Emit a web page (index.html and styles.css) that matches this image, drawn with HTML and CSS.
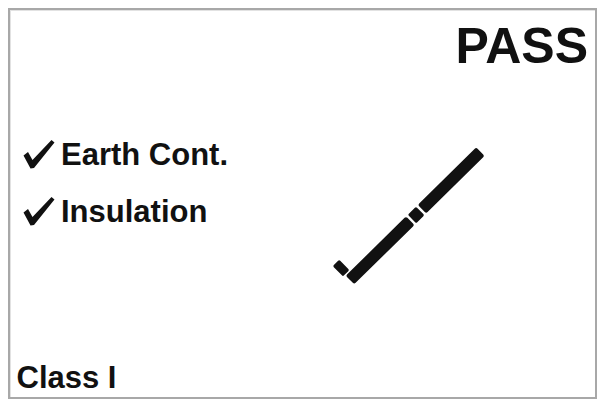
FILE: index.html
```html
<!DOCTYPE html>
<html>
<head>
<meta charset="utf-8">
<link rel="stylesheet" href="styles.css">
</head>
<body>
<div class="screen">
  <div class="header">PASS</div>
  <div class="main">
    <ul class="checks">
      <li class="item">
        <svg class="tick" viewBox="0 0 32 31" width="32" height="31"><polygon points="0.5,16.5 5,13 9.5,21 28.5,1 31.5,3.5 11,29 7.5,29.5" fill="#111"/></svg>
        <span class="label">Earth Cont.</span>
      </li>
      <li class="item">
        <svg class="tick" viewBox="0 0 32 31" width="32" height="31"><polygon points="0.5,16.5 5,13 9.5,21 28.5,1 31.5,3.5 11,29 7.5,29.5" fill="#111"/></svg>
        <span class="label">Insulation</span>
      </li>
    </ul>
    <svg class="bigtick" viewBox="0 0 170 150" width="170" height="150">
      <g transform="translate(25 140) rotate(-44.56)" fill="#111">
        <rect x="-2.5" y="-22" width="9" height="14.5" rx="1.5"/>
        <rect x="0" y="-6" width="84.5" height="12" rx="2"/>
        <rect x="87" y="-6" width="11.5" height="12" rx="1.5"/>
        <rect x="101" y="-6" width="82" height="12" rx="2"/>
      </g>
    </svg>
  </div>
  <div class="footer">Class I</div>
</div>
</body>
</html>
```
FILE: styles.css
```css
html, body {
  margin: 0;
  padding: 0;
  background: #ffffff;
}
body {
  padding: 8px 0 0 8px;
  font-family: "Liberation Sans", Arial, sans-serif;
  font-weight: bold;
  color: #111111;
}
.screen {
  box-sizing: border-box;
  width: 589px;
  height: 391px;
  border: 2px solid #a8a8a8;
  box-shadow: inset 1px 1px 0 #e2e2e2;
  display: flex;
  flex-direction: column;
  padding: 10.5px 7px 4.5px 6.5px;
}
.header {
  font-size: 50px;
  line-height: 50px;
  text-align: right;
}
.main {
  flex: 1;
  display: grid;
  grid-template-columns: 308.5px auto;
  align-items: start;
  padding-top: 68.5px;
}
.checks {
  list-style: none;
  margin: 0;
  padding: 0 0 0 6px;
  display: flex;
  flex-direction: column;
  gap: 26px;
}
.item {
  display: flex;
  align-items: flex-start;
  gap: 6.5px;
  font-size: 31px;
  line-height: 31px;
}
.tick {
  display: block;
  flex: none;
}
.bigtick {
  display: block;
  margin-top: 1px;
}
.footer {
  font-size: 31px;
  line-height: 31px;
}
```
